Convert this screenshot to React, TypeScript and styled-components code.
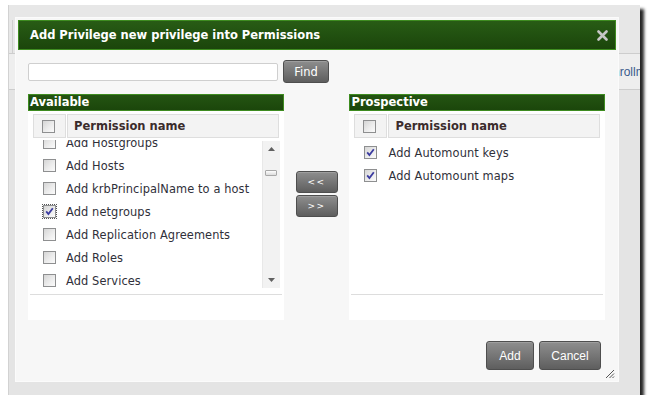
import React from 'react';
import styled, { createGlobalStyle } from 'styled-components';

const GlobalStyle = createGlobalStyle`
  html, body {
    margin: 0;
    padding: 0;
    background: #ffffff;
    font-family: "DejaVu Sans", Verdana, sans-serif;
  }
`;

const available = [
  { name: 'Add Hostgroups', checked: false },
  { name: 'Add Hosts', checked: false },
  { name: 'Add krbPrincipalName to a host', checked: false },
  { name: 'Add netgroups', checked: true, focus: true },
  { name: 'Add Replication Agreements', checked: false },
  { name: 'Add Roles', checked: false },
  { name: 'Add Services', checked: false },
];

const prospective = [
  { name: 'Add Automount keys', checked: true },
  { name: 'Add Automount maps', checked: true },
];

interface CheckProps {
  checked?: boolean;
  focus?: boolean;
}

function Check({ checked, focus }: CheckProps): JSX.Element {
  return (
    <CheckBox $focus={focus}>
      {checked && (
        <svg width="11" height="11" viewBox="0 0 11 11">
          <path d="M2.2 5.4 L4.4 8 L8.8 2.2" fill="none" stroke="#3c3ca0" strokeWidth="1.8" />
        </svg>
      )}
    </CheckBox>
  );
}

function ScrollArrow({ down }: { down?: boolean }): JSX.Element {
  return (
    <ArrowCell>
      <svg width="7" height="4" viewBox="0 0 7 4">
        <path d={down ? 'M0 0 L7 0 L3.5 4 Z' : 'M0 4 L7 4 L3.5 0 Z'} fill="#606060" />
      </svg>
    </ArrowCell>
  );
}

interface PanelProps {
  title: string;
  items: { name: string; checked: boolean; focus?: boolean }[];
  scroll?: boolean;
}

function Panel({ title, items, scroll }: PanelProps): JSX.Element {
  return (
    <PanelBox>
      <PanelHeader>{title}</PanelHeader>
      <PanelBody>
        <HeadRow>
          <HeadCheckCell>
            <Check />
          </HeadCheckCell>
          <HeadNameCell>Permission name</HeadNameCell>
        </HeadRow>
        <Viewport>
          <RowList $offset={scroll ? -9 : 1}>
            {items.map((item) => (
              <Row key={item.name} $gap={scroll ? 10 : 11}>
                <Check checked={item.checked} focus={item.focus} />
                <RowText>{item.name}</RowText>
              </Row>
            ))}
          </RowList>
          {scroll && (
            <ScrollBar>
              <ScrollArrow />
              <ScrollTrack>
                <Thumb />
              </ScrollTrack>
              <ScrollArrow down />
            </ScrollBar>
          )}
        </Viewport>
        <Divider />
      </PanelBody>
    </PanelBox>
  );
}

export default function App(): JSX.Element {
  return (
    <>
      <GlobalStyle />
      <Window>
        <TopBand>
          <TopCell />
        </TopBand>
        <LinkBand>
          <PageLink>Enrollment</PageLink>
        </LinkBand>
        <RestBand />

        <Dialog>
          <TitleBar>
            <TitleText>Add Privilege new privilege into Permissions</TitleText>
            <svg width="11" height="11" viewBox="0 0 11 11">
              <path d="M1.5 1.5 L9.5 9.5 M9.5 1.5 L1.5 9.5" stroke="#c6c6c6" strokeWidth="2.6" strokeLinecap="round" />
            </svg>
          </TitleBar>
          <DialogBody>
            <SearchRow>
              <SearchInput type="text" />
              <GreyButton $w={46} $h={23}>Find</GreyButton>
            </SearchRow>
            <Columns>
              <Panel title="Available" items={available} scroll />
              <MoveColumn>
                <GreyButton $w={42} $h={22} $small>&lt;&lt;</GreyButton>
                <GreyButton $w={42} $h={22} $small>&gt;&gt;</GreyButton>
              </MoveColumn>
              <Panel title="Prospective" items={prospective} />
            </Columns>
            <Footer>
              <GreyButton $w={48} $h={29} $sans>Add</GreyButton>
              <GreyButton $w={62} $h={29} $sans>Cancel</GreyButton>
            </Footer>
          </DialogBody>
          <Grip width="10" height="10" viewBox="0 0 10 10">
            <path d="M9 1 L1 9 M9 4.5 L4.5 9 M9 7.5 L7.5 9" stroke="#555" strokeWidth="1" />
          </Grip>
        </Dialog>
      </Window>
    </>
  );
}

const Window = styled.div`
  position: relative;
  margin: 5px 0 0 8px;
  width: 632px;
  height: 390px;
  background: #e4e4e4;
  border-left: 1px solid #d2d2d2;
  box-sizing: border-box;
  overflow: hidden;
  box-shadow: 4px 4px 3px rgba(0, 0, 0, 0.85);
  display: flex;
  flex-direction: column;
`;

const TopBand = styled.div`
  height: 48px;
  background: #e7e7e7;
  border-bottom: 1px solid #cdcdcd;
  display: flex;
`;

const TopCell = styled.div`
  margin-top: 15px;
  width: 3px;
  border-right: 1px solid #cfcfcf;
`;

const LinkBand = styled.div`
  height: 35px;
  background: #eeeeee;
  border-bottom: 1px solid #cdcdcd;
  display: flex;
  align-items: center;
  padding-left: 596px;
`;

const PageLink = styled.span`
  font-family: "Liberation Sans", Arial, sans-serif;
  font-size: 12px;
  color: #3a5a8c;
  white-space: nowrap;
`;

const RestBand = styled.div`
  flex: 1;
  background: #e4e4e4;
`;

const Dialog = styled.div`
  position: absolute;
  left: 6px;
  top: 12px;
  width: 604px;
  height: 365px;
  box-sizing: border-box;
  padding: 2px 2px 0 2px;
  background: #f7f7f7;
  border: 1px solid #fbfbfb;
  display: flex;
  flex-direction: column;
`;

const TitleBar = styled.div`
  height: 30px;
  box-sizing: border-box;
  border: 1px solid #3e8c20;
  background: linear-gradient(#285c15, #1b450b);
  display: flex;
  align-items: center;
  justify-content: space-between;
  padding: 0 7px 0 11px;
`;

const TitleText = styled.span`
  color: #ffffff;
  font-weight: bold;
  font-size: 11.5px;
`;

const DialogBody = styled.div`
  padding: 0 11px 0 10px;
  display: flex;
  flex-direction: column;
`;

const SearchRow = styled.div`
  margin-top: 10px;
  display: flex;
  align-items: center;
  gap: 5px;
`;

const SearchInput = styled.input`
  width: 250px;
  height: 18px;
  box-sizing: border-box;
  border: 1px solid #cfcfcf;
  border-radius: 2px;
  background: #ffffff;
  margin: 0;
  padding: 0 3px;
`;

const GreyButton = styled.button<{ $w: number; $h: number; $small?: boolean; $sans?: boolean }>`
  width: ${(p) => p.$w}px;
  height: ${(p) => p.$h}px;
  box-sizing: border-box;
  margin: 0;
  padding: 0;
  border: 1px solid #4e4e4e;
  border-radius: 3px;
  background: linear-gradient(#8e8e8e, #5e5e5e);
  color: #ffffff;
  font-family: ${(p) => (p.$sans ? '"Liberation Sans", Arial, sans-serif' : '"DejaVu Sans", Verdana, sans-serif')};
  font-size: ${(p) => (p.$small ? '9px' : p.$sans ? '12px' : '11.5px')};
  letter-spacing: ${(p) => (p.$small ? '1.5px' : '0')};
  box-shadow: inset 0 1px 0 rgba(255, 255, 255, 0.15);
`;

const Columns = styled.div`
  margin-top: 11px;
  display: flex;
`;

const MoveColumn = styled.div`
  width: 66px;
  display: flex;
  flex-direction: column;
  align-items: center;
  padding-top: 77px;
  gap: 2px;
`;

const PanelBox = styled.div`
  width: 256px;
  height: 226px;
  display: flex;
  flex-direction: column;
`;

const PanelHeader = styled.div`
  height: 17px;
  box-sizing: border-box;
  border: 1px solid #3e8c20;
  background: linear-gradient(#245412, #1b460b);
  color: #ffffff;
  font-weight: bold;
  font-size: 11.5px;
  line-height: 15px;
  padding-left: 1px;
`;

const PanelBody = styled.div`
  flex: 1;
  background: #ffffff;
  padding-top: 3px;
  display: flex;
  flex-direction: column;
`;

const HeadRow = styled.div`
  height: 24px;
  margin: 0 5px;
  display: flex;
  gap: 1px;
`;

const HeadCheckCell = styled.div`
  width: 33px;
  box-sizing: border-box;
  border: 1px solid #dedede;
  background: #f3f3f3;
  display: flex;
  align-items: center;
  justify-content: center;
  padding-right: 2px;
`;

const HeadNameCell = styled.div`
  flex: 1;
  box-sizing: border-box;
  border: 1px solid #dedede;
  background: #f3f3f3;
  display: flex;
  align-items: center;
  padding-left: 6px;
  font-weight: bold;
  font-size: 11.5px;
  color: #3b2c2c;
`;

const Viewport = styled.div`
  margin: 2px 4px 0 0;
  height: 149px;
  overflow: hidden;
  display: flex;
`;

const RowList = styled.div<{ $offset: number }>`
  flex: 1;
  margin-top: ${(p) => p.$offset}px;
`;

const Row = styled.div<{ $gap: number }>`
  height: 23px;
  display: flex;
  align-items: center;
  padding-left: 15px;
  gap: ${(p) => p.$gap}px;
`;

const RowText = styled.span`
  font-size: 11.4px;
  letter-spacing: 0.1px;
  color: #30303a;
  white-space: nowrap;
`;

const CheckBox = styled.span<{ $focus?: boolean }>`
  width: 13px;
  height: 13px;
  box-sizing: border-box;
  border: 1px solid #8e8f90;
  background: linear-gradient(135deg, #d5d5d5 0%, #ececec 55%, #fbfbfb 100%);
  display: flex;
  align-items: center;
  justify-content: center;
  flex-shrink: 0;
  outline: ${(p) => (p.$focus ? '1px dotted #555' : 'none')};
  outline-offset: 0;
`;

const ScrollBar = styled.div`
  width: 17px;
  margin: 1px 0 1px 0;
  background: #f2f2f2;
  border-left: 1px solid #e8e8e8;
  display: flex;
  flex-direction: column;
`;

const ArrowCell = styled.div`
  height: 16px;
  display: flex;
  align-items: center;
  justify-content: center;
`;

const ScrollTrack = styled.div`
  flex: 1;
  padding-top: 13px;
  display: flex;
  justify-content: center;
`;

const Thumb = styled.div`
  width: 12px;
  height: 6px;
  box-sizing: border-box;
  border: 1px solid #a8a8a8;
  border-radius: 1px;
  background: linear-gradient(#fdfdfd, #dcdcdc);
`;

const Divider = styled.div`
  margin: 5px 2px 0 2px;
  height: 1px;
  background: #dddddd;
`;

const Footer = styled.div`
  margin-top: 21px;
  display: flex;
  justify-content: flex-end;
  gap: 5px;
  padding-right: 4px;
`;

const Grip = styled.svg`
  position: absolute;
  right: 3px;
  bottom: 2px;
`;
